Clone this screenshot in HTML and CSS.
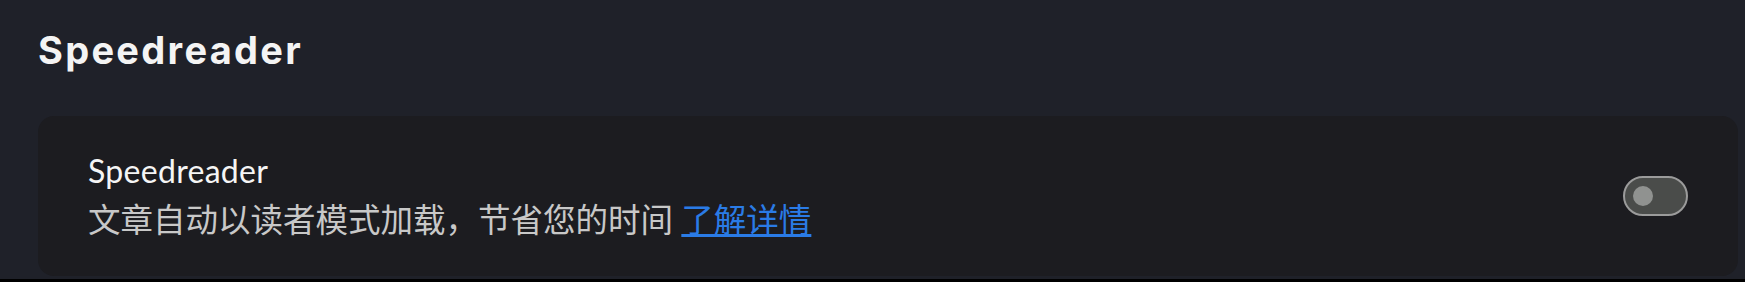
FILE: index.html
```html
<!DOCTYPE html>
<html lang="zh-CN">
<head>
    <meta charset="UTF-8">
    <meta name="viewport" content="width=device-width, initial-scale=1.0">
    <title>Speedreader</title>
    <link rel="stylesheet" href="styles.css">
</head>
<body>

    <div class="page">
        <h2 class="section-title">Speedreader</h2>

        <div class="card">
            <div class="card-text">
                <div class="card-label">Speedreader</div>
                <div class="card-desc">文章自动以读者模式加载，节省您的时间 <a href="#" class="learn-more">了解详情</a></div>
            </div>
            <button class="toggle" aria-label="Speedreader">
                <span class="knob"></span>
            </button>
        </div>
    </div>

</body>
</html>
```
FILE: styles.css
```css
html{
    background-color: #000;
}
body{
    margin: 0px;
}
.page{
    height: 279px;
    box-sizing: border-box;
    padding: 24px 7px 0 38px;
    background-color: #1f2129;
}
.section-title{
    margin: 0px;
    color: #f4f4f4;
    font-family: Inter, 'Noto Sans', sans-serif;
    font-weight: 700;
    font-size: 38px;
    line-height: 52px;
    letter-spacing: 2.3px;
}
.card{
    display: flex;
    align-items: center;
    justify-content: space-between;
    margin-top: 40px;
    padding: 32px 50px 32px 50px;
    background-color: #1c1c20;
    border-radius: 16px;
}
.card-label{
    color: #f5f5f5;
    font-family: Lato, 'Noto Sans CJK SC', sans-serif;
    font-size: 32px;
    line-height: 46px;
    letter-spacing: 0.3px;
}
.card-desc{
    margin-top: 2px;
    color: #c8c8c8;
    font-family: Lato, 'Noto Sans CJK SC', sans-serif;
    font-size: 32.5px;
    line-height: 48px;
}
.learn-more{
    color: #2a7be6;
    text-decoration: underline;
}
.toggle{
    display: flex;
    align-items: center;
    width: 65px;
    height: 40px;
    padding: 0 0 0 8px;
    box-sizing: border-box;
    background-color: #4a4c4a;
    border: 2px solid #9b9b9b;
    border-radius: 20px;
}
.knob{
    width: 20px;
    height: 20px;
    border-radius: 50%;
    background-color: #909290;
}
```
